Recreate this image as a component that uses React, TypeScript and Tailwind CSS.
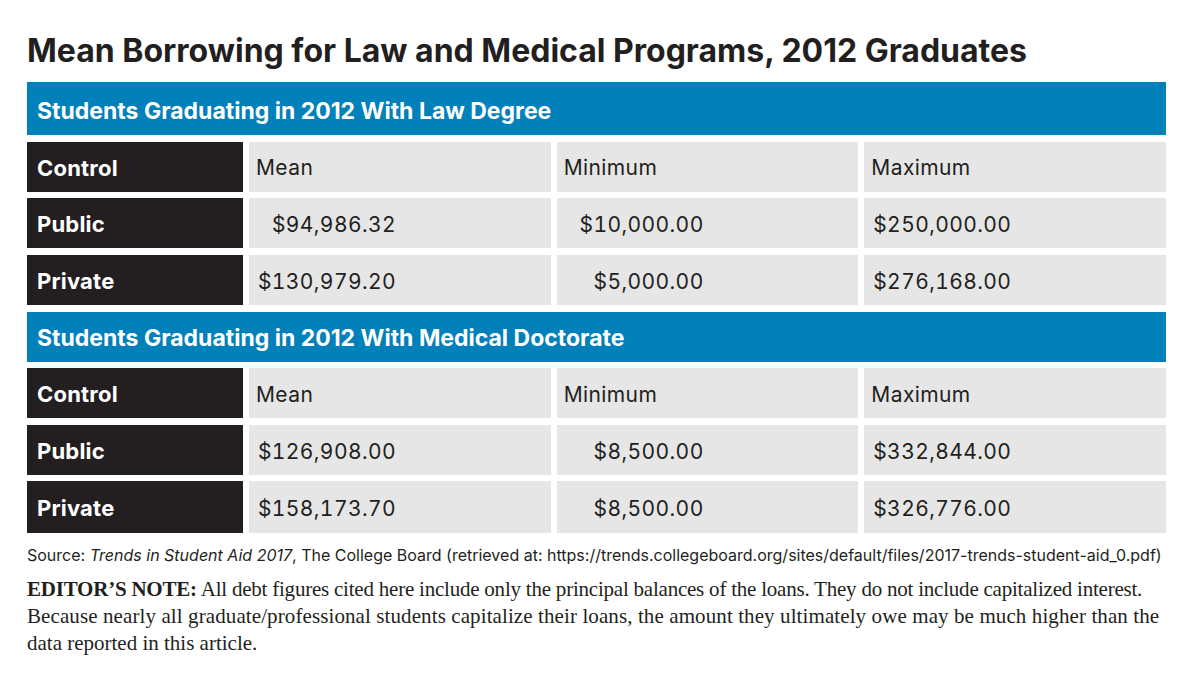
import React from "react";

const sans = "font-['Inter',_'Liberation_Sans',_sans-serif]";

type Row = { label: string; vals: [string, string, string] };

const law: Row[] = [
  { label: "Public", vals: ["$94,986.32", "$10,000.00", "$250,000.00"] },
  { label: "Private", vals: ["$130,979.20", "$5,000.00", "$276,168.00"] },
];
const med: Row[] = [
  { label: "Public", vals: ["$126,908.00", "$8,500.00", "$332,844.00"] },
  { label: "Private", vals: ["$158,173.70", "$8,500.00", "$326,776.00"] },
];

function Bar({ text, first }: { text: string; first?: boolean }) {
  return (
    <div
      className={
        "col-span-4 flex items-center bg-[#0180b9] pl-[10px] text-[23px] font-bold text-white " +
        (first ? "h-[53px] pt-[5px]" : "h-[50px] pt-[3px]")
      }
    >
      {text}
    </div>
  );
}

function Label({ text, h }: { text: string; h?: string }) {
  return (
    <div
      className={
        "flex items-center bg-[#231f20] pl-[10px] pt-[3px] text-[22px] font-bold tracking-[0.2px] text-white " +
        (h ?? "h-[50px]")
      }
    >
      {text}
    </div>
  );
}

function HeadCell({ text }: { text: string }) {
  return (
    <div className="flex h-[50px] items-center bg-[#e6e6e6] pl-[7px] pt-[3px] text-[21px] tracking-[0.4px] text-[#231f20]">
      {text}
    </div>
  );
}

function NumCell({ text, h }: { text: string; h?: string }) {
  return (
    <div
      className={
        "flex items-center bg-[#e6e6e6] pl-[7px] pt-[3px] text-[21px] tracking-[0.4px] text-[#231f20] " +
        (h ?? "h-[50px]")
      }
    >
      <span className="inline-block w-[140px] text-right tabular-nums">{text}</span>
    </div>
  );
}

function Section({ title, rows, first }: { title: string; rows: Row[]; first?: boolean }) {
  return (
    <>
      <Bar text={title} first={first} />
      <Label text="Control" />
      <HeadCell text="Mean" />
      <HeadCell text="Minimum" />
      <HeadCell text="Maximum" />
      {rows.map((r, ri) => {
        const h = !first && ri === rows.length - 1 ? "h-[52px]" : "h-[50px]";
        return (
          <React.Fragment key={r.label}>
            <Label text={r.label} h={h} />
            {r.vals.map((v, i) => (
              <NumCell key={i} text={v} h={h} />
            ))}
          </React.Fragment>
        );
      })}
    </>
  );
}

export default function App() {
  return (
    <div className={"h-[683px] w-[1200px] overflow-hidden bg-white pl-[27px] pr-[34px] pt-[35px] " + sans}>
      <h1 className="whitespace-nowrap text-[32px] font-bold leading-[32px] text-[#231f20]">
        Mean Borrowing for Law and Medical Programs, 2012 Graduates
      </h1>
      <div className="mt-[15px] grid grid-cols-[216px_1fr_1fr_1fr] gap-x-[6px] gap-y-[6.65px]">
        <Section title="Students Graduating in 2012 With Law Degree" rows={law} first />
        <Section title="Students Graduating in 2012 With Medical Doctorate" rows={med} />
      </div>
      <p className="mt-[12px] whitespace-nowrap text-[16px] leading-[20px] text-[#231f20]">
        Source: <i>Trends in Student Aid 2017</i>, The College Board (retrieved at:
        https://trends.collegeboard.org/sites/default/files/2017-trends-student-aid_0.pdf)
      </p>
      <div className="mt-[11px] font-['Liberation_Serif',_serif] text-[21px] leading-[27px] text-[#231f20]">
        <div className="whitespace-nowrap tracking-[-0.22px]">
          <b>EDITOR’S NOTE:</b> All debt figures cited here include only the principal balances of the loans. They do
          not include capitalized interest.
        </div>
        <div className="whitespace-nowrap tracking-[0.1px]">
          Because nearly all graduate/professional students capitalize their loans, the amount they ultimately owe
          may be much higher than the
        </div>
        <div className="whitespace-nowrap">data reported in this article.</div>
      </div>
    </div>
  );
}
